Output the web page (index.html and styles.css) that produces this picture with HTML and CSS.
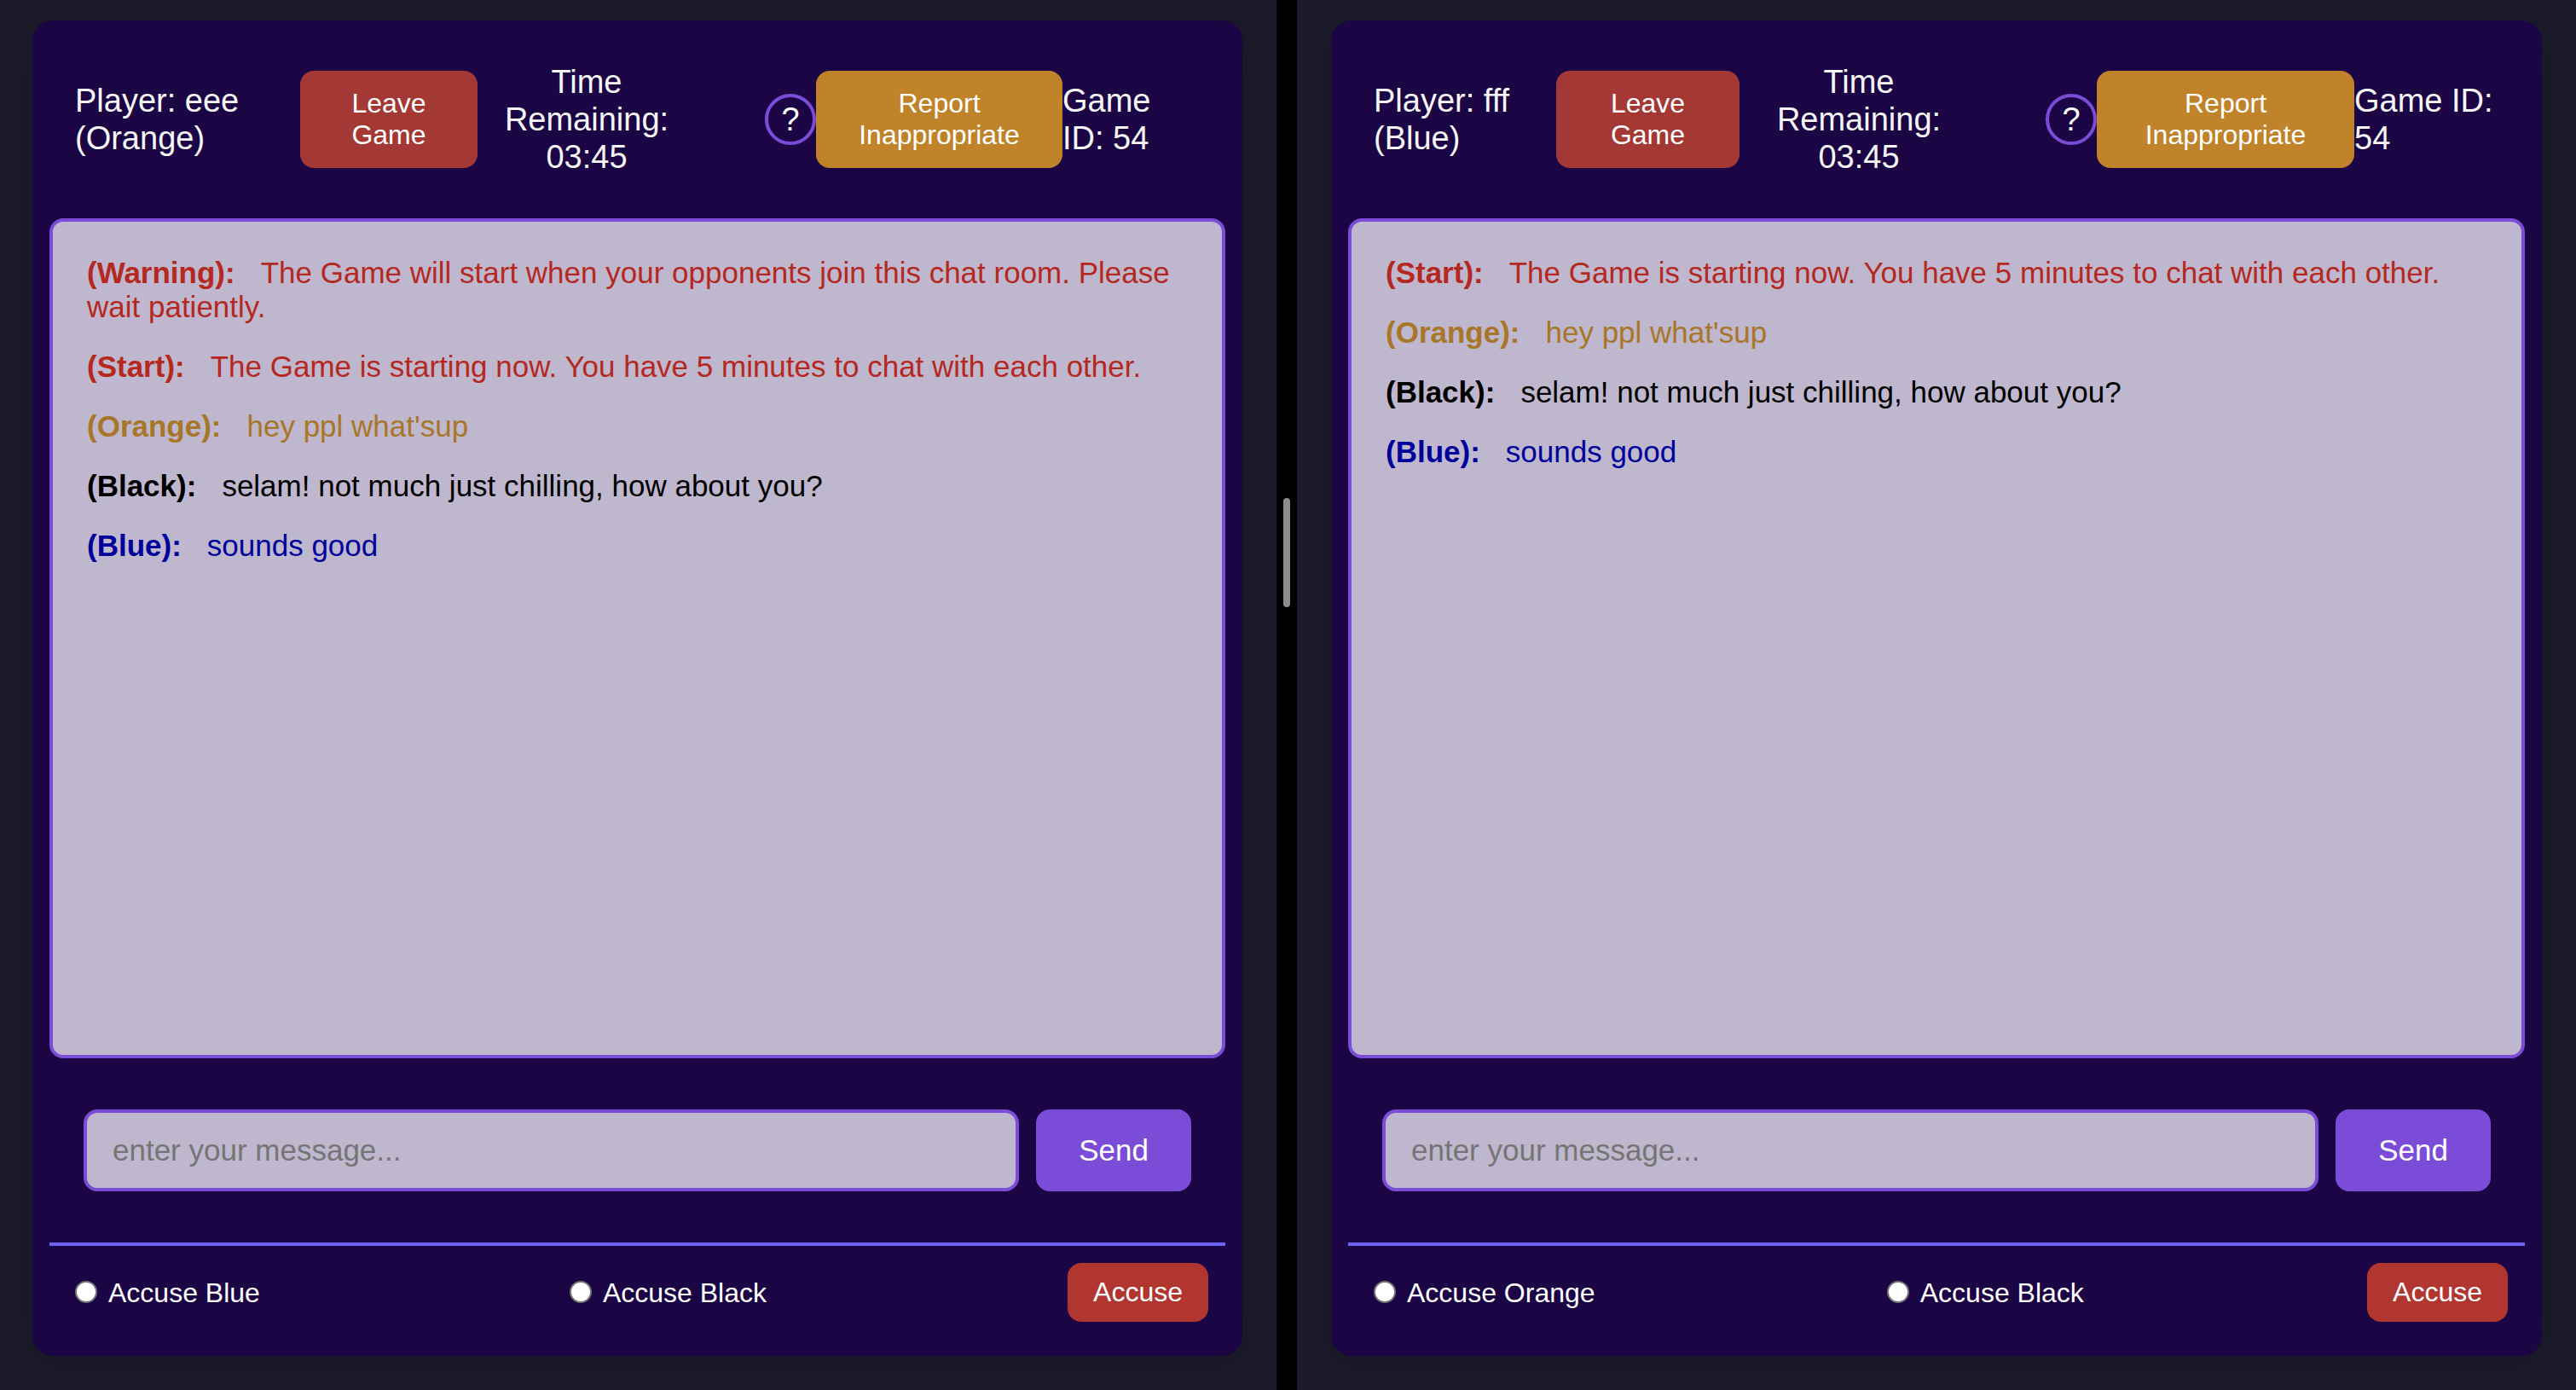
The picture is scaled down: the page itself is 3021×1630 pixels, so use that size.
FILE: index.html
```
<!DOCTYPE html>
<html lang="en">
<head>
<meta charset="utf-8">
<title>Chat Game</title>
<link rel="stylesheet" href="styles.css">
</head>
<body>
<div class="split">
  <section class="pane pane-left">
    <main class="card">
      <header class="topbar topbar-left">
        <span class="info">Player: eee (Orange)</span>
        <button class="btn leave" type="button">Leave Game</button>
        <span class="info timer">Time Remaining: 03:45</span>
        <button class="help" type="button">?</button>
        <button class="btn report" type="button">Report Inappropriate</button>
        <span class="info">Game ID: 54</span>
      </header>
      <div class="chat">
        <p class="msg system"><b class="who">(Warning):</b>The Game will start when your opponents join this chat room. Please wait patiently.</p>
        <p class="msg system"><b class="who">(Start):</b>The Game is starting now. You have 5 minutes to chat with each other.</p>
        <p class="msg orange"><b class="who">(Orange):</b>hey ppl what'sup</p>
        <p class="msg black"><b class="who">(Black):</b>selam! not much just chilling, how about you?</p>
        <p class="msg blue"><b class="who">(Blue):</b>sounds good</p>
      </div>
      <form class="compose">
        <input class="message" type="text" placeholder="enter your message..." aria-label="Message">
        <button class="send" type="button">Send</button>
      </form>
      <form class="vote">
        <label class="choice"><input class="radio" type="radio" name="accuse">Accuse Blue</label>
        <label class="choice"><input class="radio" type="radio" name="accuse">Accuse Black</label>
        <button class="accuse" type="button">Accuse</button>
      </form>
    </main>
  </section>
  <div class="divider"><span class="handle"></span></div>
  <section class="pane pane-right">
    <main class="card">
      <header class="topbar topbar-right">
        <span class="info">Player: fff (Blue)</span>
        <button class="btn leave" type="button">Leave Game</button>
        <span class="info timer">Time Remaining: 03:45</span>
        <button class="help" type="button">?</button>
        <button class="btn report" type="button">Report Inappropriate</button>
        <span class="info">Game ID: 54</span>
      </header>
      <div class="chat">
        <p class="msg system"><b class="who">(Start):</b>The Game is starting now. You have 5 minutes to chat with each other.</p>
        <p class="msg orange"><b class="who">(Orange):</b>hey ppl what'sup</p>
        <p class="msg black"><b class="who">(Black):</b>selam! not much just chilling, how about you?</p>
        <p class="msg blue"><b class="who">(Blue):</b>sounds good</p>
      </div>
      <form class="compose">
        <input class="message" type="text" placeholder="enter your message..." aria-label="Message">
        <button class="send" type="button">Send</button>
      </form>
      <form class="vote">
        <label class="choice"><input class="radio" type="radio" name="accuse">Accuse Orange</label>
        <label class="choice"><input class="radio" type="radio" name="accuse">Accuse Black</label>
        <button class="accuse" type="button">Accuse</button>
      </form>
    </main>
  </section>
</div>
</body>
</html>
```
FILE: styles.css
```
* {
  box-sizing: border-box;
}

body {
  margin: 0;
  background: #000;
  color: #fff;
  font-family: "Liberation Sans", Arial, sans-serif;
  font-size: 32px;
}

button,
input {
  margin: 0;
  font-family: inherit;
}

button {
  border: 0;
  color: #fff;
  cursor: pointer;
}

.split {
  display: grid;
  grid-template-columns: minmax(0, 1497fr) 24px minmax(0, 1500fr);
  min-height: 100vh;
}

.pane {
  display: flex;
  overflow: hidden;
  padding: 24px 40px 40px;
  background: #1b1b2d;
}

.pane-left {
  padding-left: 38px;
}

.divider {
  display: flex;
  justify-content: center;
  padding-top: 584px;
}

.handle {
  width: 8px;
  height: 128px;
  border-radius: 4px;
  background: #8c8c8c;
}

.card {
  display: flex;
  flex: 1;
  flex-direction: column;
  min-width: 0;
  padding: 20px;
  border-radius: 24px;
  background: #1b0545;
  box-shadow: 0 8px 40px rgba(18, 18, 18, 0.4);
}

.topbar {
  display: grid;
  align-items: center;
  margin-bottom: 20px;
  padding: 30px;
}

.topbar-left {
  grid-template-columns:
    minmax(0, 264fr) minmax(0, 208fr) minmax(0, 256fr)
    minmax(0, 141fr) minmax(0, 289fr) minmax(0, 161fr);
}

.topbar-right {
  grid-template-columns:
    minmax(0, 214fr) minmax(0, 215fr) minmax(0, 280fr)
    minmax(0, 139fr) minmax(0, 302fr) minmax(0, 170fr);
}

.info {
  color: #f5f5f5;
  font-size: 38px;
  line-height: 44px;
}

.topbar-left .info:last-child {
  padding-right: 30px;
}

.timer {
  text-align: center;
}

.btn {
  padding: 20px 40px;
  border-radius: 16px;
  font-size: 32px;
  line-height: 37px;
}

.leave {
  background: #a33835;
}

.report {
  background: #c0832a;
}

.help {
  justify-self: end;
  width: 60px;
  height: 60px;
  padding: 0;
  border: 4px solid #7a4cd8;
  border-radius: 50%;
  background: transparent;
  font-size: 38px;
  line-height: 44px;
}

.chat {
  flex: 1;
  padding: 40px;
  border: 4px solid #7a4cd8;
  border-radius: 16px;
  background: #bfb7ce;
  font-size: 35px;
  line-height: 40px;
}

.msg {
  margin: 0 0 30px;
}

.who {
  margin-right: 30px;
}

.system {
  color: #b5281f;
}

.orange {
  color: #a87628;
}

.black {
  color: #000;
}

.blue {
  color: #00009b;
}

.compose {
  display: flex;
  gap: 20px;
  padding: 60px 40px;
}

.message {
  flex: 1;
  min-width: 0;
  height: 96px;
  padding: 0 30px;
  border: 4px solid #7a4cd8;
  border-radius: 16px;
  background: #bfb7ce;
  color: #000;
  font-size: 35px;
}

.message::placeholder {
  color: #757575;
}

.send {
  padding: 0 50px;
  border-radius: 16px;
  background: #7a4cd8;
  font-size: 35px;
}

.vote {
  display: flex;
  align-items: center;
  justify-content: space-between;
  padding: 20px;
  border-top: 4px solid #6c63f8;
}

.choice {
  display: flex;
  align-items: center;
  gap: 13px;
  line-height: 40px;
}

.radio {
  width: 26px;
  height: 26px;
  margin: 0 0 2px 10px;
  appearance: none;
  border: 2px solid #767676;
  border-radius: 50%;
  background: #fff;
}

.radio:checked {
  border-width: 8px;
}

.accuse {
  padding: 16px 30px;
  border-radius: 16px;
  background: #b0362f;
  font-size: 32px;
  line-height: 37px;
}
```
